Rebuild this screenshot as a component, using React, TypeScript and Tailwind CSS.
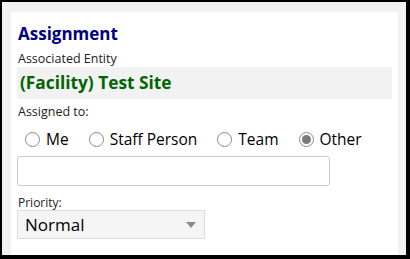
import React from "react";

function Radio({ label, checked }: { label: string; checked?: boolean }) {
  return (
    <label className="flex items-center gap-[6px]">
      <span className="flex h-[15px] w-[15px] items-center justify-center rounded-full border border-[#8a8a8a] bg-white">
        {checked && <span className="h-[9px] w-[9px] rounded-full bg-[#7a7a7a]" />}
      </span>
      <span className="text-[15.5px] leading-[22px] text-black">{label}</span>
    </label>
  );
}

export default function App() {
  return (
    <div
      className="h-[259px] w-[410px] overflow-hidden bg-black pl-[2px] pr-[4px] pt-[2px] pb-[4px]"
      style={{ fontFamily: '"Open Sans", "Noto Sans", sans-serif' }}
    >
      <div className="h-full bg-[#f2f2f2] pl-[9px] pr-[8px] pt-[10px]">
        <div className="h-full bg-white px-[6px] pt-[10px]">
          <div className="pl-[1px] text-[17px] font-bold leading-[24px] text-[#000080]">Assignment</div>
          <div className="mt-[5px] pl-[1px] text-[12.5px] leading-[16px] text-[#222]">Associated Entity</div>
          <div className="flex h-[32px] items-center bg-[#f2f2f2] pl-[3px] text-[17.3px] font-bold text-[#006400]">
            (Facility) Test Site
          </div>
          <div className="mt-[5px] pl-[1px] text-[12.5px] leading-[16px] text-[#222]">Assigned to:</div>
          <div className="mt-[8px] flex items-center gap-[20px] pl-[8px]">
            <Radio label="Me" />
            <Radio label="Staff Person" />
            <Radio label="Team" />
            <Radio label="Other" checked />
          </div>
          <div className="mt-[6px] h-[30px] w-[313px] rounded-[3px] border border-[#cccccc] bg-white" />
          <div className="mt-[9px] pl-[1px] text-[12px] leading-[15px] text-[#222]">Priority:</div>
          <div className="flex h-[29px] w-[188px] items-center justify-between border border-[#dddddd] bg-[#f5f5f5] pl-[7px] pr-[8px]">
            <span className="text-[17px] leading-[22px] text-black">Normal</span>
            <svg width="10" height="6" viewBox="0 0 10 6">
              <path d="M0 0 L10 0 L5 6 Z" fill="#8a8a8a" />
            </svg>
          </div>
        </div>
      </div>
    </div>
  );
}
